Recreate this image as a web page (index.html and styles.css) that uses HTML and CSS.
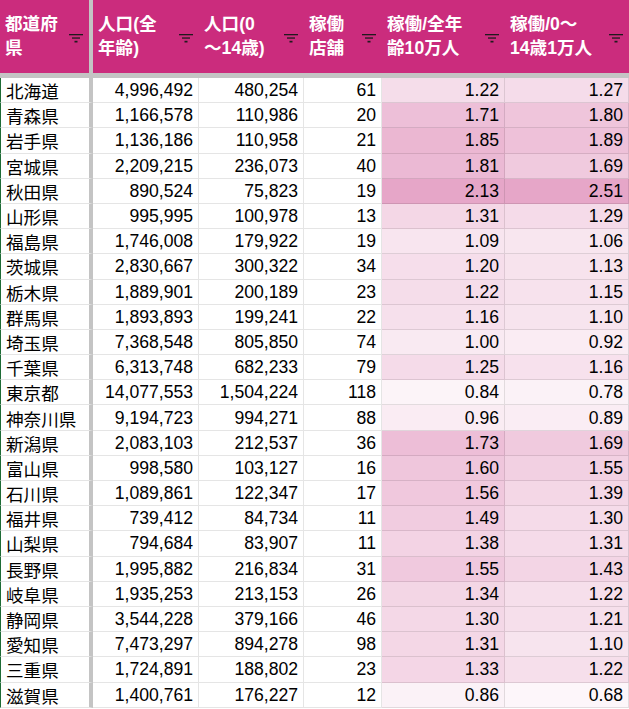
FILE: index.html
```html
<!DOCTYPE html>
<html lang="ja">
<head>
<meta charset="utf-8">
<title>稼働店舗</title>
<link rel="stylesheet" href="styles.css">
</head>
<body>
<div class="sheet">
  <div class="hd first"><span class="ht">都道府<br>県</span><svg class="fi" viewBox="0 0 14 9"><rect x="0" y="0" width="14" height="1.3"/><rect x="3" y="3.4" width="8" height="1.3"/><rect x="5.5" y="6.8" width="3" height="1.7"/></svg></div>
  <div class="hd"><span class="ht">人口(全<br>年齢)</span><svg class="fi" viewBox="0 0 14 9"><rect x="0" y="0" width="14" height="1.3"/><rect x="3" y="3.4" width="8" height="1.3"/><rect x="5.5" y="6.8" width="3" height="1.7"/></svg></div>
  <div class="hd"><span class="ht">人口(0<br>～14歳)</span><svg class="fi" viewBox="0 0 14 9"><rect x="0" y="0" width="14" height="1.3"/><rect x="3" y="3.4" width="8" height="1.3"/><rect x="5.5" y="6.8" width="3" height="1.7"/></svg></div>
  <div class="hd"><span class="ht">稼働<br>店舗</span><svg class="fi" viewBox="0 0 14 9"><rect x="0" y="0" width="14" height="1.3"/><rect x="3" y="3.4" width="8" height="1.3"/><rect x="5.5" y="6.8" width="3" height="1.7"/></svg></div>
  <div class="hd"><span class="ht">稼働/全年<br>齢10万人</span><svg class="fi" viewBox="0 0 14 9"><rect x="0" y="0" width="14" height="1.3"/><rect x="3" y="3.4" width="8" height="1.3"/><rect x="5.5" y="6.8" width="3" height="1.7"/></svg></div>
  <div class="hd"><span class="ht">稼働/0～<br>14歳1万人</span><svg class="fi" viewBox="0 0 14 9"><rect x="0" y="0" width="14" height="1.3"/><rect x="3" y="3.4" width="8" height="1.3"/><rect x="5.5" y="6.8" width="3" height="1.7"/></svg></div>

  <div class="c name">北海道</div><div class="c num">4,996,492</div><div class="c num">480,254</div><div class="c num">61</div><div class="c num heat e" style="--v:1.22">1.22</div><div class="c num heat f" style="--v:1.27">1.27</div>
  <div class="c name">青森県</div><div class="c num">1,166,578</div><div class="c num">110,986</div><div class="c num">20</div><div class="c num heat e" style="--v:1.71">1.71</div><div class="c num heat f" style="--v:1.80">1.80</div>
  <div class="c name">岩手県</div><div class="c num">1,136,186</div><div class="c num">110,958</div><div class="c num">21</div><div class="c num heat e" style="--v:1.85">1.85</div><div class="c num heat f" style="--v:1.89">1.89</div>
  <div class="c name">宮城県</div><div class="c num">2,209,215</div><div class="c num">236,073</div><div class="c num">40</div><div class="c num heat e" style="--v:1.81">1.81</div><div class="c num heat f" style="--v:1.69">1.69</div>
  <div class="c name">秋田県</div><div class="c num">890,524</div><div class="c num">75,823</div><div class="c num">19</div><div class="c num heat e" style="--v:2.13">2.13</div><div class="c num heat f" style="--v:2.51">2.51</div>
  <div class="c name">山形県</div><div class="c num">995,995</div><div class="c num">100,978</div><div class="c num">13</div><div class="c num heat e" style="--v:1.31">1.31</div><div class="c num heat f" style="--v:1.29">1.29</div>
  <div class="c name">福島県</div><div class="c num">1,746,008</div><div class="c num">179,922</div><div class="c num">19</div><div class="c num heat e" style="--v:1.09">1.09</div><div class="c num heat f" style="--v:1.06">1.06</div>
  <div class="c name">茨城県</div><div class="c num">2,830,667</div><div class="c num">300,322</div><div class="c num">34</div><div class="c num heat e" style="--v:1.20">1.20</div><div class="c num heat f" style="--v:1.13">1.13</div>
  <div class="c name">栃木県</div><div class="c num">1,889,901</div><div class="c num">200,189</div><div class="c num">23</div><div class="c num heat e" style="--v:1.22">1.22</div><div class="c num heat f" style="--v:1.15">1.15</div>
  <div class="c name">群馬県</div><div class="c num">1,893,893</div><div class="c num">199,241</div><div class="c num">22</div><div class="c num heat e" style="--v:1.16">1.16</div><div class="c num heat f" style="--v:1.10">1.10</div>
  <div class="c name">埼玉県</div><div class="c num">7,368,548</div><div class="c num">805,850</div><div class="c num">74</div><div class="c num heat e" style="--v:1.00">1.00</div><div class="c num heat f" style="--v:0.92">0.92</div>
  <div class="c name">千葉県</div><div class="c num">6,313,748</div><div class="c num">682,233</div><div class="c num">79</div><div class="c num heat e" style="--v:1.25">1.25</div><div class="c num heat f" style="--v:1.16">1.16</div>
  <div class="c name">東京都</div><div class="c num">14,077,553</div><div class="c num">1,504,224</div><div class="c num">118</div><div class="c num heat e" style="--v:0.84">0.84</div><div class="c num heat f" style="--v:0.78">0.78</div>
  <div class="c name">神奈川県</div><div class="c num">9,194,723</div><div class="c num">994,271</div><div class="c num">88</div><div class="c num heat e" style="--v:0.96">0.96</div><div class="c num heat f" style="--v:0.89">0.89</div>
  <div class="c name">新潟県</div><div class="c num">2,083,103</div><div class="c num">212,537</div><div class="c num">36</div><div class="c num heat e" style="--v:1.73">1.73</div><div class="c num heat f" style="--v:1.69">1.69</div>
  <div class="c name">富山県</div><div class="c num">998,580</div><div class="c num">103,127</div><div class="c num">16</div><div class="c num heat e" style="--v:1.60">1.60</div><div class="c num heat f" style="--v:1.55">1.55</div>
  <div class="c name">石川県</div><div class="c num">1,089,861</div><div class="c num">122,347</div><div class="c num">17</div><div class="c num heat e" style="--v:1.56">1.56</div><div class="c num heat f" style="--v:1.39">1.39</div>
  <div class="c name">福井県</div><div class="c num">739,412</div><div class="c num">84,734</div><div class="c num">11</div><div class="c num heat e" style="--v:1.49">1.49</div><div class="c num heat f" style="--v:1.30">1.30</div>
  <div class="c name">山梨県</div><div class="c num">794,684</div><div class="c num">83,907</div><div class="c num">11</div><div class="c num heat e" style="--v:1.38">1.38</div><div class="c num heat f" style="--v:1.31">1.31</div>
  <div class="c name">長野県</div><div class="c num">1,995,882</div><div class="c num">216,834</div><div class="c num">31</div><div class="c num heat e" style="--v:1.55">1.55</div><div class="c num heat f" style="--v:1.43">1.43</div>
  <div class="c name">岐阜県</div><div class="c num">1,935,253</div><div class="c num">213,153</div><div class="c num">26</div><div class="c num heat e" style="--v:1.34">1.34</div><div class="c num heat f" style="--v:1.22">1.22</div>
  <div class="c name">静岡県</div><div class="c num">3,544,228</div><div class="c num">379,166</div><div class="c num">46</div><div class="c num heat e" style="--v:1.30">1.30</div><div class="c num heat f" style="--v:1.21">1.21</div>
  <div class="c name">愛知県</div><div class="c num">7,473,297</div><div class="c num">894,278</div><div class="c num">98</div><div class="c num heat e" style="--v:1.31">1.31</div><div class="c num heat f" style="--v:1.10">1.10</div>
  <div class="c name">三重県</div><div class="c num">1,724,891</div><div class="c num">188,802</div><div class="c num">23</div><div class="c num heat e" style="--v:1.33">1.33</div><div class="c num heat f" style="--v:1.22">1.22</div>
  <div class="c name">滋賀県</div><div class="c num">1,400,761</div><div class="c num">176,227</div><div class="c num">12</div><div class="c num heat e" style="--v:0.86">0.86</div><div class="c num heat f" style="--v:0.68">0.68</div>
</div>
</body>
</html>
```

FILE: styles.css
```css
html, body {
  margin: 0;
  padding: 0;
  background: #ffffff;
  overflow: hidden;
}

.sheet {
  display: grid;
  grid-template-columns: 93px 106px 105px 78px 123px 124px;
  grid-template-rows: 78px;
  grid-auto-rows: 25.2px;
  width: 629px;
  font-family: "Liberation Sans", "Noto Sans CJK JP", sans-serif;
  font-size: 17.6px;
  color: #000000;
}

.hd {
  box-sizing: border-box;
  background: #cb2c7d;
  border-bottom: 5px solid #c4c4c4;
  display: flex;
  align-items: center;
  justify-content: space-between;
  padding: 0 6px 0 5px;
  color: #ffffff;
  font-weight: bold;
}

.hd.first {
  border-right: 4px solid #c4c4c4;
  padding-left: 5px;
}

.ht {
  line-height: 24px;
  white-space: nowrap;
  margin-top: -2px;
}

.fi {
  width: 14px;
  height: 9px;
  flex: none;
  fill: #1f1a1d;
  margin-top: 4px;
}

.c {
  box-sizing: border-box;
  border-right: 1px solid rgba(0, 0, 0, 0.1);
  border-bottom: 1px solid rgba(0, 0, 0, 0.1);
  display: flex;
  align-items: center;
  white-space: nowrap;
  overflow: hidden;
  padding-top: 1px;
}

.name {
  border-left: 1px solid #1e6b35;
  border-right: 4px solid #c4c4c4;
  padding-left: 5px;
}

.num {
  justify-content: flex-end;
  padding-right: 5px;
}

.e {
  --t: calc((var(--v) - 0.65) / 1.48);
}

.f {
  --t: calc((var(--v) - 0.48) / 2.03);
}

.heat {
  background-color: color-mix(in srgb, #e6a6c8 calc(var(--t) * 100%), #ffffff);
}
```
